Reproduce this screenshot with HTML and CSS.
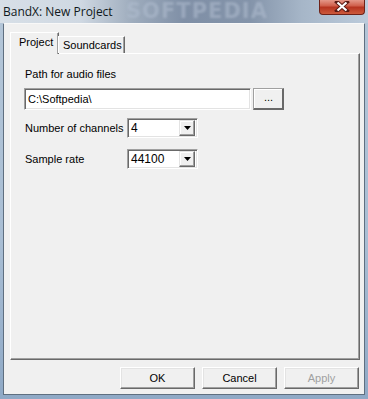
FILE: index.html
```html
<!DOCTYPE html>
<html lang="en">
  <head>
    <meta charset="UTF-8" />
    <title>BandX: New Project</title>
    <link rel="stylesheet" href="styles.css">
  </head>
  <body>
    <div class="window">
      <div class="titlebar">
        <span class="title">BandX: New Project</span>
        <span class="watermark">SOFTPEDIA</span>
        <div class="close">
          <svg width="16" height="11" viewBox="0 0 16 11">
            <path d="M3 1 L13 10 M13 1 L3 10" stroke="#5a1a14" stroke-width="4" stroke-linecap="square"/>
            <path d="M3.5 1.5 L12.5 9.5 M12.5 1.5 L3.5 9.5" stroke="#ffffff" stroke-width="2.2"/>
          </svg>
        </div>
      </div>

      <div class="client">
        <div class="tabs">
          <div class="tab active">Project</div>
          <div class="tab">Soundcards</div>
        </div>

        <div class="panel">
          <div class="label">Path for audio files</div>
          <div class="path-row">
            <div class="edit">C:\Softpedia\</div>
            <div class="btn small">...</div>
          </div>

          <div class="row channels">
            <div class="row-label">Number of channels</div>
            <div class="combo">
              <span class="value">4</span>
              <div class="drop">
                <svg width="7" height="4" viewBox="0 0 7 4"><path d="M0 0 H7 L3.5 4 Z" fill="#000"/></svg>
              </div>
            </div>
          </div>

          <div class="row rate">
            <div class="row-label">Sample rate</div>
            <div class="combo">
              <span class="value">44100</span>
              <div class="drop">
                <svg width="7" height="4" viewBox="0 0 7 4"><path d="M0 0 H7 L3.5 4 Z" fill="#000"/></svg>
              </div>
            </div>
          </div>
        </div>

        <div class="buttons">
          <div class="btn">OK</div>
          <div class="btn">Cancel</div>
          <div class="btn disabled">Apply</div>
        </div>
      </div>
    </div>
  </body>
</html>
```

FILE: styles.css
```css
html, body {
  margin: 0;
  padding: 0;
}
body {
  width: 368px;
  height: 399px;
  overflow: hidden;
  font-family: "Liberation Sans", Arial, sans-serif;
  font-size: 11px;
  color: #000;
}
.window {
  width: 368px;
  height: 399px;
  box-sizing: border-box;
  display: flex;
  flex-direction: column;
  padding: 0 3px 4px 3px;
  background: linear-gradient(180deg, #b4c6d8 0%, #a9bed4 60%, #8fa9c6 100%);
}

/* title bar */
.titlebar {
  position: relative;
  height: 23px;
  margin: 0 -3px;
  overflow: hidden;
  background: linear-gradient(90deg, #d7dfe7 0%, #cfd8e2 22%, #9eacbd 36%, #7f8fa6 50%, #8494aa 68%, #a6b6c8 82%, #bccbdb 100%);
}
.title {
  position: absolute;
  left: 3px;
  top: 3px;
  font-family: "Open Sans", "Noto Sans", sans-serif;
  font-size: 12px;
  color: #101820;
  z-index: 1;
}
.watermark {
  position: absolute;
  left: 126px;
  top: 0;
  line-height: 22px;
  font-family: "DejaVu Sans", sans-serif;
  font-weight: bold;
  font-size: 21px;
  letter-spacing: 1px;
  color: rgba(176, 190, 208, 0.55);
  filter: blur(0.8px);
}
.close {
  position: absolute;
  left: 319px;
  top: -1px;
  width: 46px;
  height: 16px;
  box-sizing: border-box;
  border: 1px solid #6e2218;
  border-top: none;
  border-radius: 0 0 4px 4px;
  background: linear-gradient(180deg, #e8a193 0%, #d0604c 45%, #b63420 55%, #cc5a3c 100%);
  display: flex;
  align-items: center;
  justify-content: center;
  z-index: 1;
}

/* client area */
.client {
  flex: 1;
  display: flex;
  flex-direction: column;
  background: #f0f0f0;
  border: 1px solid #5f6f80;
  border-top: 1px solid #f8f8f8;
  padding: 8px 4px 5px 5px;
}
.tabs {
  display: flex;
  align-items: flex-end;
  height: 21px;
  margin-left: 1px;
  position: relative;
  z-index: 1;
}
.tab {
  height: 17px;
  line-height: 16px;
  padding: 0 5px 0 4px;
  border-top: 1px solid #ffffff;
  border-left: 1px solid #ffffff;
  border-right: 1px solid #696969;
  box-shadow: inset -1px 0 #a0a0a0;
  background: #f0f0f0;
  box-sizing: border-box;
}
.tab.active {
  height: 22px;
  margin-bottom: -1px;
  line-height: 19px;
  padding: 0 7px 0 8px;
  width: 49px;
}
.tab:not(.active) {
  width: 67px;
  margin-left: -1px;
}

.panel {
  height: 307px;
  box-sizing: border-box;
  border-top: 1px solid #ffffff;
  border-left: 1px solid #ffffff;
  border-right: 1px solid #696969;
  border-bottom: 1px solid #696969;
  box-shadow: inset -1px -1px #a0a0a0;
  margin-left: 1px;
  padding: 14px 0 0 14px;
  display: flex;
  flex-direction: column;
}
.label {
  line-height: 13px;
  height: 13px;
}
.path-row {
  display: flex;
  margin-top: 7px;
  margin-left: -1px;
  gap: 2px;
}
.edit {
  width: 227px;
  height: 22px;
  box-sizing: border-box;
  background: #fff;
  border-style: solid;
  border-width: 1px;
  border-color: #a0a0a0 #ffffff #ffffff #a0a0a0;
  box-shadow: inset 1px 1px #696969, inset -1px -1px #e3e3e3;
  padding: 3px 0 0 3px;
  line-height: 14px;
}

.btn {
  width: 75px;
  height: 22px;
  box-sizing: border-box;
  background: #f0f0f0;
  border-style: solid;
  border-width: 1px;
  border-color: #ffffff #696969 #696969 #ffffff;
  box-shadow: inset -1px -1px #a0a0a0, inset 1px 1px #e3e3e3;
  text-align: center;
  line-height: 20px;
}
.btn.small {
  width: 31px;
  border-color: #a0a0a0 #696969 #696969 #a0a0a0;
  box-shadow: inset -1px -1px #696969, inset 1px 1px #ffffff;
  line-height: 17px;
}
.btn.disabled {
  color: #a0a0a0;
}

.row {
  display: flex;
  align-items: center;
}
.channels {
  margin-top: 8px;
}
.rate {
  margin-top: 11px;
}
.row-label {
  width: 102px;
}
.combo {
  width: 71px;
  height: 20px;
  box-sizing: border-box;
  background: #fff;
  border-style: solid;
  border-width: 1px;
  border-color: #a0a0a0 #ffffff #ffffff #a0a0a0;
  box-shadow: inset 1px 1px #696969, inset -1px -1px #e3e3e3;
  display: flex;
  align-items: center;
  padding: 2px 2px 2px 3px;
}
.combo .value {
  flex: 1;
  font-size: 12px;
  line-height: 14px;
}
.drop {
  width: 16px;
  height: 16px;
  box-sizing: border-box;
  background: #f0f0f0;
  border-style: solid;
  border-width: 1px;
  border-color: #e3e3e3 #696969 #696969 #e3e3e3;
  box-shadow: inset -1px -1px #a0a0a0, inset 1px 1px #ffffff;
  display: flex;
  align-items: center;
  justify-content: center;
}

.buttons {
  display: flex;
  justify-content: flex-end;
  gap: 7px;
  margin-top: 7px;
  margin-right: 1px;
}
```
